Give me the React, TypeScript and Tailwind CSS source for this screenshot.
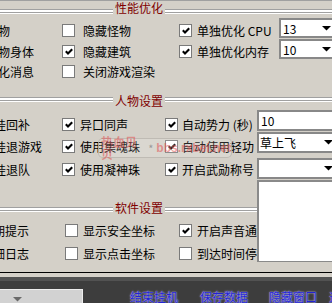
import React from "react";

const FONT = "font-['Noto_Sans_CJK_SC','Noto_Sans',sans-serif]";

function Check({ on }: { on?: boolean }) {
  return (
    <div className="w-[13px] h-[13px] shrink-0 bg-white border border-[#7a7a7a] flex items-center justify-center">
      {on && (
        <svg width="8" height="7" viewBox="0 0 8 7">
          <path d="M0.8 3.2 L3 5.4 L7.2 1.2" stroke="#000" strokeWidth="2.1" fill="none" />
        </svg>
      )}
    </div>
  );
}

function Arrow({ color = "#000" }: { color?: string }) {
  return (
    <svg width="9" height="5" viewBox="0 0 9 5" className="shrink-0">
      <polygon points="0,0 9,0 4.5,4.6" fill={color} />
    </svg>
  );
}

function Etch() {
  return (
    <div className="flex flex-col">
      <div className="h-[1px] bg-[#a0a0a0]" />
      <div className="h-[2px] bg-white" />
      <div className="h-[1px] bg-[#a0a0a0]" />
      <div className="h-[1px] bg-white" />
    </div>
  );
}

function Header({ title, titleMt, lineMt }: { title: string; titleMt: string; lineMt: string }) {
  return (
    <div className="h-[14px] shrink-0 flex items-start">
      <div className={`w-[113px] shrink-0 ${lineMt}`}>
        <Etch />
      </div>
      <div className={`px-[2px] leading-[12px] text-[12px] text-[#800000] whitespace-nowrap ${titleMt}`}>{title}</div>
      <div className={`flex-1 ${lineMt}`}>
        <Etch />
      </div>
    </div>
  );
}

function Row(props: {
  mt: string;
  leftW: string;
  left: string;
  midOn?: boolean;
  mid: string;
  midGap: string;
  midW: string;
  rOn?: boolean;
  right: string;
  rGap: string;
}) {
  return (
    <div className={`flex items-center h-[13px] ${props.mt}`}>
      <div className={`${props.leftW} shrink-0 overflow-hidden whitespace-nowrap`}>{props.left}</div>
      <Check on={props.midOn} />
      <div className={`${props.midGap} ${props.midW} shrink-0 overflow-hidden whitespace-nowrap`}>{props.mid}</div>
      <Check on={props.rOn} />
      <div className={`${props.rGap} whitespace-nowrap`}>{props.right}</div>
    </div>
  );
}

export default function App() {
  return (
    <div
      className={`relative w-[332px] h-[303px] overflow-hidden bg-[#d4d0c8] text-black text-[12px] leading-[13px] ${FONT} flex flex-col`}
    >
      <div className="h-[1px] shrink-0 bg-[#a0a0a0]" />

      {/* 性能优化 */}
      <div className="h-[94px] shrink-0 flex flex-col">
        <Header title="性能优化" titleMt="mt-[1px]" lineMt="mt-[8px]" />
        <div className="flex">
          <div className="ml-[-2px] w-[281px] shrink-0 flex flex-col pt-[9px]">
            <Row mt="mt-0" leftW="w-[64px]" left="物" mid="隐藏怪物" midGap="ml-[8px]" midW="w-[96px]" rOn right="单独优化 CPU" rGap="ml-[5px]" />
            <Row mt="mt-[8px]" leftW="w-[64px]" left="物身体" midOn mid="隐藏建筑" midGap="ml-[8px]" midW="w-[96px]" rOn right="单独优化内存" rGap="ml-[5px]" />
            <div className="flex items-center h-[13px] mt-[7px]">
              <div className="w-[64px] shrink-0 whitespace-nowrap">化消息</div>
              <Check />
              <div className="ml-[8px] whitespace-nowrap">关闭游戏渲染</div>
            </div>
          </div>
          <div className="flex flex-col pt-[3px]">
            <div className="w-[58px] h-[20px] bg-white border-2 border-[#888888] flex items-center justify-between pl-[2px] pr-[4px]">
              <span>13</span>
              <Arrow />
            </div>
            <div className="mt-[1px] w-[58px] h-[20px] bg-white border-2 border-[#888888] flex items-center justify-between pl-[2px] pr-[4px]">
              <span>10</span>
              <Arrow />
            </div>
          </div>
        </div>
      </div>

      {/* 人物设置 */}
      <div className="h-[107px] shrink-0 flex flex-col">
        <Header title="人物设置" titleMt="mt-0" lineMt="mt-[2px]" />
        <div className="flex">
          <div className="ml-[-6px] w-[263px] shrink-0 flex flex-col pt-[9px]">
            <Row mt="mt-0" leftW="w-[68px]" left="挂回补" midOn mid="异口同声" midGap="ml-[5px]" midW="w-[85px]" rOn right="自动势力 (秒)" rGap="ml-[4px]" />
            <Row mt="mt-[9px]" leftW="w-[68px]" left="挂退游戏" midOn mid="使用集魂珠" midGap="ml-[5px]" midW="w-[85px]" rOn right="自动使用轻功" rGap="ml-[4px]" />
            <Row mt="mt-[10px]" leftW="w-[68px]" left="挂退队" midOn mid="使用凝神珠" midGap="ml-[5px]" midW="w-[85px]" rOn right="开启武勋称号" rGap="ml-[4px]" />
          </div>
          <div className="flex flex-col pt-[1px]">
            <div className="w-[82px] h-[21px] bg-white border-2 border-[#888888] flex items-center pl-[2px]">
              <span>10</span>
            </div>
            <div className="mt-[1px] w-[81px] h-[21px] bg-white border-2 border-[#888888] flex items-center justify-between pl-[1px] pr-[3px]">
              <span>草上飞</span>
              <Arrow />
            </div>
            <div className="mt-[5px] w-[81px] h-[21px] bg-white border-2 border-[#888888] flex items-center justify-end pr-[3px]">
              <Arrow />
            </div>
            <div className="relative z-10 mt-[1px] w-[82px] h-[82px] shrink-0 bg-white border-l-2 border-t-2 border-b border-[#8a8a8a]" />
          </div>
        </div>
      </div>

      {/* 软件设置 */}
      <div className="h-[70px] shrink-0 flex flex-col">
        <Header title="软件设置" titleMt="mt-0" lineMt="mt-[5px]" />
        <div className="ml-[-7px] w-[264px] shrink-0 flex flex-col pt-[8px] overflow-hidden">
          <Row mt="mt-0" leftW="w-[72px]" left="期提示" mid="显示安全坐标" midGap="ml-[5px]" midW="w-[96px]" rOn right="开启声音通知" rGap="ml-[5px]" />
          <Row mt="mt-[10px]" leftW="w-[72px]" left="细日志" mid="显示点击坐标" midGap="ml-[5px]" midW="w-[96px]" right="到达时间停止" rGap="ml-[5px]" />
        </div>
      </div>

      <div className="h-[1px] shrink-0 bg-black" />
      <div className="h-[4px] shrink-0" />

      {/* bottom bar */}
      <div className="flex-1 bg-[#3d3d3d] flex flex-col">
        <div className="h-[4px] bg-[#525252]" />
        <div className="flex items-start">
          <div className="mt-[8px] w-[83px] h-[20px] shrink-0 bg-[#d2d2d2] border-t border-r border-[#ececec] pl-[13px] pt-[7px]">
            <Arrow color="#6a6a6a" />
          </div>
          <div className="ml-[47px] mt-[10px] flex items-start text-[12px] leading-[12px] whitespace-nowrap text-[#2424d0] [text-shadow:0_0_2px_#c8c8ff,0_0_1px_#b8b8ff]">
            <span>结束挂机</span>
            <span className="ml-[22px]">保存数据</span>
            <span className="ml-[21px]">隐藏窗口</span>
            <span className="ml-[12px]">退出程序</span>
          </div>
        </div>
      </div>

      {/* watermark */}
      <div className="pointer-events-none absolute left-[98px] top-[138px] w-[134px] h-[20px] rounded-[5px] border border-[#b8b4ac]/80 bg-white/15 flex items-center pl-[2px]">
        <span className="text-[12px] leading-[12px] font-bold text-[#e05050]/55">热血贝贝</span>
        <span className="ml-[3px] text-[11px] leading-[12px] text-[#8a8a8a]/80">*</span>
        <span className="ml-[3px] font-['Liberation_Sans',sans-serif] font-bold text-[12px] leading-[12px] text-[#e05050]/55">
          bbs.rxbei.net
        </span>
      </div>
    </div>
  );
}
